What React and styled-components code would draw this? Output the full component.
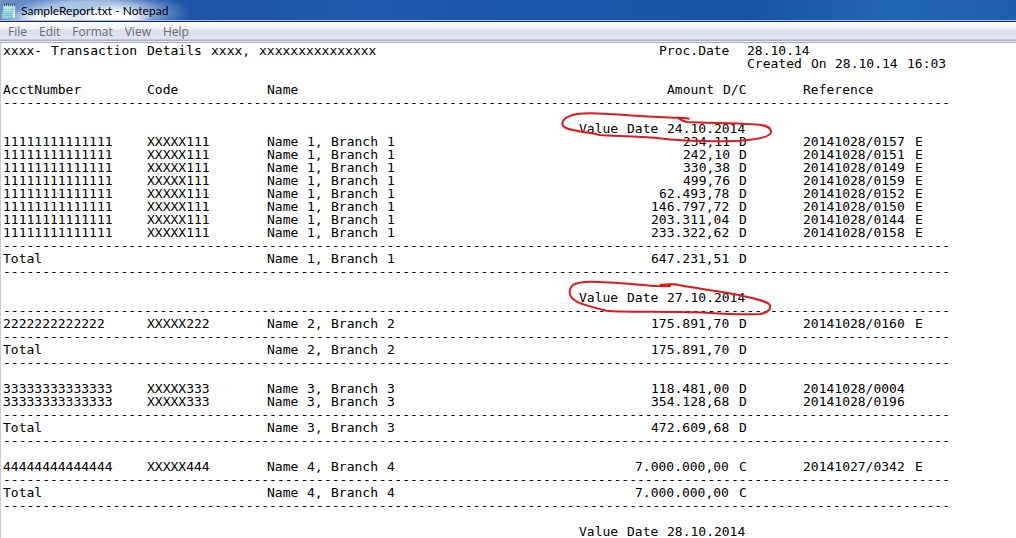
import React, { useState } from 'react';
import styled, { createGlobalStyle } from 'styled-components';

const GlobalStyle = createGlobalStyle`
  * {
    box-sizing: border-box;
  }
  body {
    margin: 0;
    overflow: hidden;
    background: #fff;
  }
`;

const Window = styled.div`
  display: flex;
  flex-direction: column;
  height: 100vh;
`;

const TitleBar = styled.header`
  display: flex;
  align-items: center;
  height: 21px;
  padding: 1px 1px 0;
  gap: 4px;
  border-bottom: 1px solid #a5bde2;
  background:
    radial-gradient(ellipse 48px 12px at 50px 19px, #fff 20%, rgba(255, 255, 255, 0)),
    radial-gradient(ellipse 40px 14px at 112px 18px, #fff 40%, rgba(255, 255, 255, 0)),
    radial-gradient(ellipse 100px 22px at 92px 13px, rgba(176, 199, 230, 0.95) 50%, rgba(110, 150, 210, 0.5) 80%, rgba(60, 110, 190, 0)),
    linear-gradient(90deg, #6c8fc4 0, #1d54a5 190px, #1f5bae 36%, #1757aa 50%, #1456a5 74%, #2267b4 88%, #1c60ad 100%);
`;

const Title = styled.h1`
  margin: 0;
  font: 12px/19px 'Lato', 'Open Sans', sans-serif;
  color: #000;
  white-space: nowrap;
`;

const MenuBar = styled.nav`
  display: flex;
  height: 22px;
  padding: 1px 2px 0;
  border-top: 1px solid #16305f;
  border-bottom: 1px solid #a3a5b8;
  background: linear-gradient(#fdfeff 0, #eef1f9 7px, #d8deee 8px, #dfe4f3 17px, #a9acc0 18px, #a9acc0 19px, #f2f3f8 19px);
`;

const MenuItem = styled.button`
  height: 18px;
  padding: 0 6px;
  border: 0;
  background: none;
  font: 12px/18px 'Open Sans', 'Noto Sans', sans-serif;
  color: #6d6d6d;
`;

const Editor = styled.main`
  position: relative;
  display: flex;
  flex: 1;
  min-height: 0;
  border-left: 1px solid #c9ccd6;
`;

const TextArea = styled.textarea`
  flex: 1;
  margin: 0;
  padding: 1px 2px 0;
  border: 0;
  outline: 0;
  resize: none;
  overflow: hidden;
  background: #fff;
  color: #000;
  font: 13px/13px 'DejaVu Sans Mono', monospace;
  tab-size: 8px;
  white-space: pre;
`;

/* pen marks lie over the text */
const PenMark = styled.svg`
  position: absolute;
  left: 539px;
  top: ${({ $top }) => $top}px;
  width: 260px;
  height: 60px;
  fill: none;
  stroke: #e0191b;
  stroke-width: 6;
  stroke-linecap: round;
  stroke-linejoin: round;
  pointer-events: none;
`;

const NotepadIcon = () => (
  <svg width="16" height="18" viewBox="0 0 16 18" aria-hidden="true">
    <path d="M2.500 3h11.500l.8 13.500-13.800.2z" fill="#e4eff3" stroke="#6c93a8" strokeWidth="0.600" />
    <path d="M2.500 3h10.500l-1 13H1z" fill="#8fd0e0" />
    <path d="M3.500 4.500h7.500l-.6 6H3z" fill="#bfe9f1" />
    <path d="M3 7.500h8.500M3 9.500h8.300M2.500 11.500h8.500M2.500 13.500h8.300" stroke="#6fb4c8" strokeWidth="0.600" />
    <path d="M3.500 1.500v2.500M5.500 1.500v2.500M7.500 1.500v2.500M9.500 1.500v2.500M11.500 1.500v2.500M13.500 1.500v2.500" stroke="#40566b" strokeWidth="0.900" />
  </svg>
);

const menus = ['File', 'Edit', 'Format', 'View', 'Help'];

const RULE = '-'.repeat(121);

// account | code | name | amount (right aligned) | reference
const row = (acct, code, name, amount, ref = '') =>
  acct.padEnd(18) + code.padEnd(15) + name.padEnd(30) + amount.padStart(30) + ' '.repeat(7) + ref;

const valueDate = (date) => ' '.repeat(72) + 'Value Date ' + date;

const branch1 = [
  ['234,11 D', '20141028/0157 E'],
  ['242,10 D', '20141028/0151 E'],
  ['330,38 D', '20141028/0149 E'],
  ['499,76 D', '20141028/0159 E'],
  ['62.493,78 D', '20141028/0152 E'],
  ['146.797,72 D', '20141028/0150 E'],
  ['203.311,04 D', '20141028/0144 E'],
  ['233.322,62 D', '20141028/0158 E'],
];

// every gap becomes a tab so the words sit on the 8px columns
const report = [
  'xxxx- Transaction Details xxxx, xxxxxxxxxxxxxxx'.padEnd(82) + 'Proc.Date  28.10.14',
  ' '.repeat(93) + 'Created On 28.10.14 16:03',
  '',
  row('AcctNumber', 'Code', 'Name', 'Amount D/C', 'Reference'),
  RULE,
  '',
  valueDate('24.10.2014'),
  ...branch1.map(([amount, ref]) => row('11111111111111', 'XXXXX111', 'Name 1, Branch 1', amount, ref)),
  RULE,
  row('Total', '', 'Name 1, Branch 1', '647.231,51 D'),
  RULE,
  '',
  valueDate('27.10.2014'),
  RULE,
  row('2222222222222', 'XXXXX222', 'Name 2, Branch 2', '175.891,70 D', '20141028/0160 E'),
  RULE,
  row('Total', '', 'Name 2, Branch 2', '175.891,70 D'),
  RULE,
  '',
  row('33333333333333', 'XXXXX333', 'Name 3, Branch 3', '118.481,00 D', '20141028/0004'),
  row('33333333333333', 'XXXXX333', 'Name 3, Branch 3', '354.128,68 D', '20141028/0196'),
  RULE,
  row('Total', '', 'Name 3, Branch 3', '472.609,68 D'),
  RULE,
  '',
  row('44444444444444', 'XXXXX444', 'Name 4, Branch 4', '7.000.000,00 C', '20141027/0342 E'),
  RULE,
  row('Total', '', 'Name 4, Branch 4', '7.000.000,00 C'),
  RULE,
  '',
  valueDate('28.10.2014'),
].join('\n').replace(/ /g, '\t');

const App = () => {
  const [text, setText] = useState(report);

  return (
    <>
      <GlobalStyle />
      <Window>
        <TitleBar>
          <NotepadIcon />
          <Title>SampleReport.txt - Notepad</Title>
        </TitleBar>
        <MenuBar>
          {menus.map((item) => (
            <MenuItem key={item} type="button">{item}</MenuItem>
          ))}
        </MenuBar>
        <Editor>
          <TextArea
            aria-label="SampleReport.txt"
            spellCheck={false}
            value={text}
            onChange={(e) => setText(e.target.value)}
          />
          <PenMark $top={57} viewBox="0 0 780 180" aria-hidden="true">
            <path d="M446 56C430 52 415 53 400 53C300 50 200 40 150 40C90 40 66 55 67 72C70 92 120 92 180 105C220 108 300 108 350 114C420 122 500 126 600 122C660 118 693 110 693 95C692 78 670 74 640 73C560 68 500 70 440 66C425 62 418 55 412 54" />
          </PenMark>
          <PenMark $top={227} viewBox="0 0 780 180" aria-hidden="true">
            <path d="M390 49L350 48C300 45 200 34 150 35C100 36 90 48 89 65C88 90 110 100 200 122C240 128 400 122 500 128C560 132 620 134 660 132C690 128 692 112 690 105C680 92 650 88 600 76C550 64 480 58 420 46C400 40 390 42 362 44L410 43" />
          </PenMark>
        </Editor>
      </Window>
    </>
  );
};

export default App;
